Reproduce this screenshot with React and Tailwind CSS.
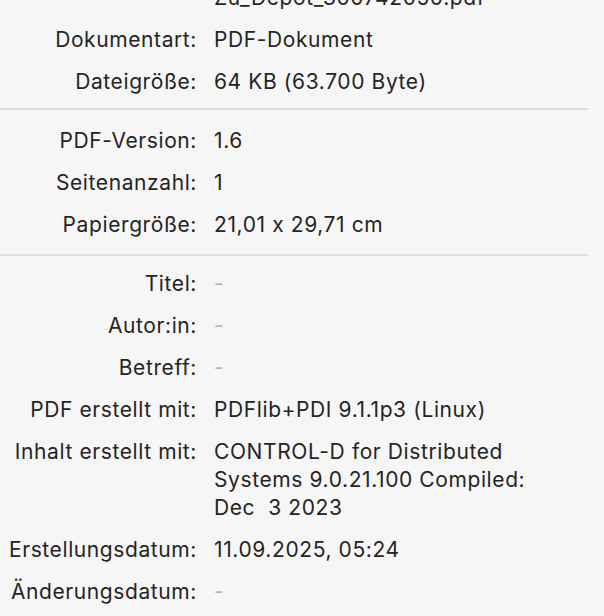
import React from "react";

const Row = ({ label, children, muted }) => (
  <div className="grid grid-cols-[197px_1fr] gap-x-[17px]">
    <div className="text-right whitespace-nowrap">{label}</div>
    <div className={muted ? "text-[#b4b4b4]" : ""}>{children}</div>
  </div>
);

export default function App() {
  return (
    <div
      className="w-[604px] h-[616px] overflow-hidden bg-[#f6f6f6] text-[#242424] text-[21px] leading-[28px] tracking-[0.6px] [font-feature-settings:'calt'_0]"
      style={{ fontFamily: "Inter, 'Noto Sans', sans-serif" }}
    >
      <div className="-mt-[16px] flex flex-col">
        <div className="flex flex-col gap-y-[14px]">
          <Row label="">Zu_Depot_300742050.pdf</Row>
          <Row label="Dokumentart:">PDF-Dokument</Row>
          <Row label="Dateigröße:">64 KB (63.700 Byte)</Row>
        </div>
        <div className="h-[2px] w-[588px] bg-[#dedede] mt-[12px] mb-[17px]" />
        <div className="flex flex-col gap-y-[14px]">
          <Row label="PDF-Version:">1.6</Row>
          <Row label="Seitenanzahl:">1</Row>
          <Row label="Papiergröße:">21,01 x 29,71 cm</Row>
        </div>
        <div className="h-[2px] w-[588px] bg-[#dedede] mt-[15px] mb-[14px]" />
        <div className="flex flex-col gap-y-[14px]">
          <Row label="Titel:" muted>-</Row>
          <Row label="Autor:in:" muted>-</Row>
          <Row label="Betreff:" muted>-</Row>
          <Row label="PDF erstellt mit:">PDFlib+PDI 9.1.1p3 (Linux)</Row>
          <Row label="Inhalt erstellt mit:">
            <div>CONTROL-D for Distributed</div>
            <div>Systems 9.0.21.100 Compiled:</div>
            <div className="whitespace-pre">Dec  3 2023</div>
          </Row>
          <Row label="Erstellungsdatum:">11.09.2025, 05:24</Row>
          <Row label="Änderungsdatum:" muted>-</Row>
        </div>
      </div>
    </div>
  );
}
